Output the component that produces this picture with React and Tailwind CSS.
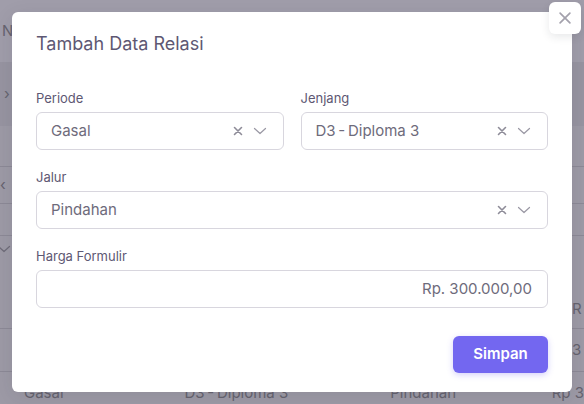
import React from "react";

const font = { fontFamily: "Inter, 'Noto Sans', sans-serif" };

function XIcon({ size = 10, stroke = 1.6, className = "" }) {
  return (
    <svg width={size} height={size} viewBox="0 0 10 10" className={className} fill="none" stroke="currentColor" strokeWidth={stroke} strokeLinecap="round">
      <path d="M1.5 1.5 L8.5 8.5 M8.5 1.5 L1.5 8.5" />
    </svg>
  );
}

function Chevron({ className = "" }) {
  return (
    <svg width="14" height="8" viewBox="0 0 14 8" className={className} fill="none" stroke="currentColor" strokeWidth="1.2" strokeLinecap="round" strokeLinejoin="round">
      <path d="M1.5 1.5 L7 6.5 L12.5 1.5" />
    </svg>
  );
}

function Select({ value }) {
  return (
    <div className="h-[38px] rounded-[6px] border border-[#d8d6de] bg-white flex items-center pl-[14px] pr-[16px]">
      <span className="flex-1 text-[15px] text-[#6e6b7b]">{value}</span>
      <XIcon className="text-[#8e8c98]" />
      <Chevron className="ml-[10px] text-[#9a98a4]" />
    </div>
  );
}

function Field({ label, children }) {
  return (
    <div className="flex flex-col">
      <label className="text-[13px] leading-[20px] text-[#5e5873] mb-[4px]">{label}</label>
      {children}
    </div>
  );
}

export default function App() {
  return (
    <div className="relative w-[584px] h-[404px] overflow-hidden bg-[#9d9aa6]" style={font}>
      {/* page behind the backdrop */}
      <div className="flex flex-col text-[15px] text-[#66636f]">
        <div className="h-[62px] bg-[#a09daa] flex items-center px-[2px]">N</div>
        <div className="h-[64px] bg-[#9794a1] flex items-center pl-[4px]">›</div>
        <div className="h-[41px] border-b border-[#8c8996]"></div>
        <div className="h-[37px] border-b border-[#8c8996] flex items-center">‹</div>
        <div className="h-[32px] border-b border-[#8c8996]"></div>
        <div className="h-[93px] border-b border-[#8c8996] flex flex-col">
          <Chevron className="mt-[9px] -ml-[3px] text-[#6f6c79]" />
          <span className="mt-[45px] self-end w-[12px] overflow-hidden">R</span>
        </div>
        <div className="h-[43px] border-b border-[#8c8996] flex justify-end items-center">
          <span className="w-[12px] overflow-hidden">3</span>
        </div>
        <div className="h-[32px] flex items-end text-[15px] leading-[22px] whitespace-nowrap">
          <span className="ml-[24px] w-[163px]">Gasal</span>
          <span className="w-[209px]">D3{"\u2009"}-{"\u2009"}Diploma 3</span>
          <span className="w-[164px]">Pindahan</span>
          <span>Rp 3</span>
        </div>
      </div>

      {/* dialog */}
      <div className="absolute left-[12px] top-[12px] w-[560px] h-[380px] bg-white rounded-[6px] px-6 pt-[18px] shadow-[0_5px_20px_rgba(34,41,47,0.1)]">
        <h2 className="text-[18px] leading-[28px] text-[#5e5873]">Tambah Data Relasi</h2>
        <div className="mt-[30px] grid grid-cols-2 gap-x-[17px]">
          <Field label="Periode">
            <Select value="Gasal" />
          </Field>
          <Field label="Jenjang">
            <Select value={"D3\u2009-\u2009Diploma 3"} />
          </Field>
        </div>
        <div className="mt-[17px]">
          <Field label="Jalur">
            <Select value="Pindahan" />
          </Field>
        </div>
        <div className="mt-[17px]">
          <Field label="Harga Formulir">
            <div className="h-[38px] rounded-[6px] border border-[#d8d6de] flex items-center justify-end pr-[15px] text-[15px] text-[#6e6b7b]">
              Rp. 300.000,00
            </div>
          </Field>
        </div>
        <div className="mt-[28px] flex justify-end">
          <button className="w-[95px] h-[37px] rounded-[6px] bg-[#7367f0] text-white text-[15px] font-semibold shadow-[0_2px_6px_rgba(115,103,240,0.3)]">
            Simpan
          </button>
        </div>
      </div>

      {/* close button */}
      <button className="absolute left-[549px] top-[2px] w-[32px] h-[32px] rounded-[6px] bg-white flex items-center justify-center shadow-[0_3px_8px_rgba(34,41,47,0.1)]">
        <XIcon size={14} stroke={1.2} className="text-[#a3a1ac]" />
      </button>
    </div>
  );
}
